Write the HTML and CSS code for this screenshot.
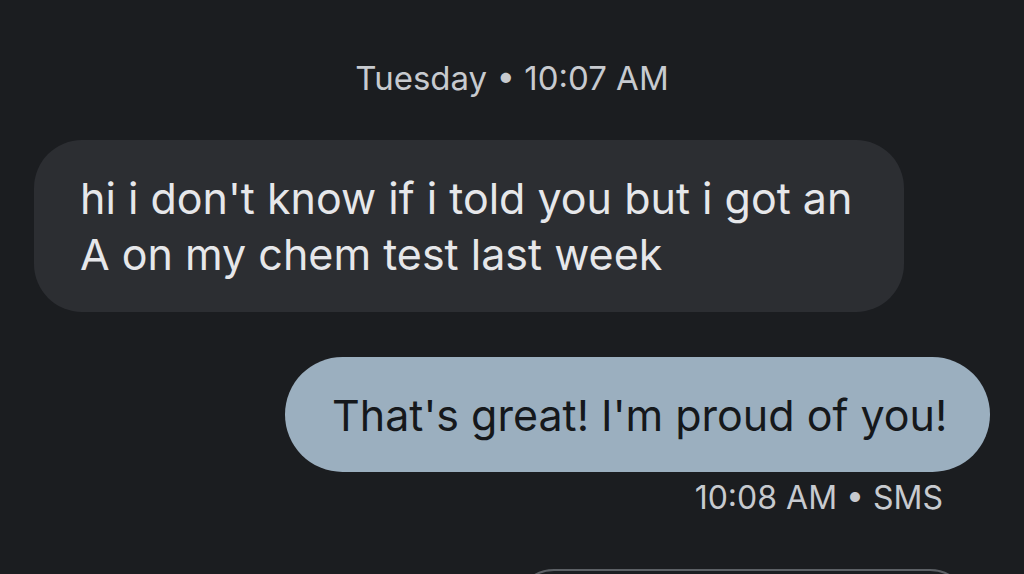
FILE: index.html
```html
<!DOCTYPE html>
<html lang="en">
<head>
<meta charset="utf-8">
<title>Messages</title>
<link rel="stylesheet" href="styles.css">
</head>
<body>
<main class="thread">
  <div class="day">Tuesday • 10:07 AM</div>
  <div class="bubble bubble-in">hi i don't know if i told you but i got an A on my chem test last week</div>
  <div class="bubble bubble-out">That's great! I'm proud of you!</div>
  <div class="meta">10:08 AM • SMS</div>
  <div class="bubble bubble-next"></div>
</main>
</body>
</html>
```
FILE: styles.css
```css
html, body {
  margin: 0;
  padding: 0;
  height: 100%;
  overflow: hidden;
  background: #1b1d20;
}
body {
  font-family: Inter, Roboto, "Liberation Sans", sans-serif;
}
.thread {
  display: flex;
  flex-direction: column;
  padding: 0 34px 0 34px;
}
.day {
  align-self: center;
  margin-top: 58px;
  font-size: 33px;
  line-height: 40px;
  color: #c7cacf;
}
.bubble {
  box-sizing: border-box;
}
.bubble-in {
  align-self: flex-start;
  margin-top: 42px;
  width: 870px;
  padding: 30px 46px 30px 46px;
  border-radius: 48px;
  background: #2c2e32;
  color: #e6e7ea;
  font-size: 43px;
  line-height: 56px;
}
.bubble-out {
  align-self: flex-end;
  margin-top: 45px;
  margin-right: 0;
  width: 705px;
  height: 115px;
  padding: 32px 0 0 47px;
  border-radius: 58px;
  background: #9bafbf;
  color: #15181b;
  font-size: 43px;
  line-height: 52px;
}
.meta {
  align-self: flex-end;
  margin-right: 47px;
  margin-top: 6px;
  font-size: 32px;
  line-height: 40px;
  color: #c7cacf;
}
.bubble-next {
  align-self: flex-end;
  margin-top: 51px;
  margin-right: 20px;
  width: 456px;
  height: 80px;
  border: 2px solid #5c6065;
  border-radius: 40px;
  background: #1b1e21;
}
```
